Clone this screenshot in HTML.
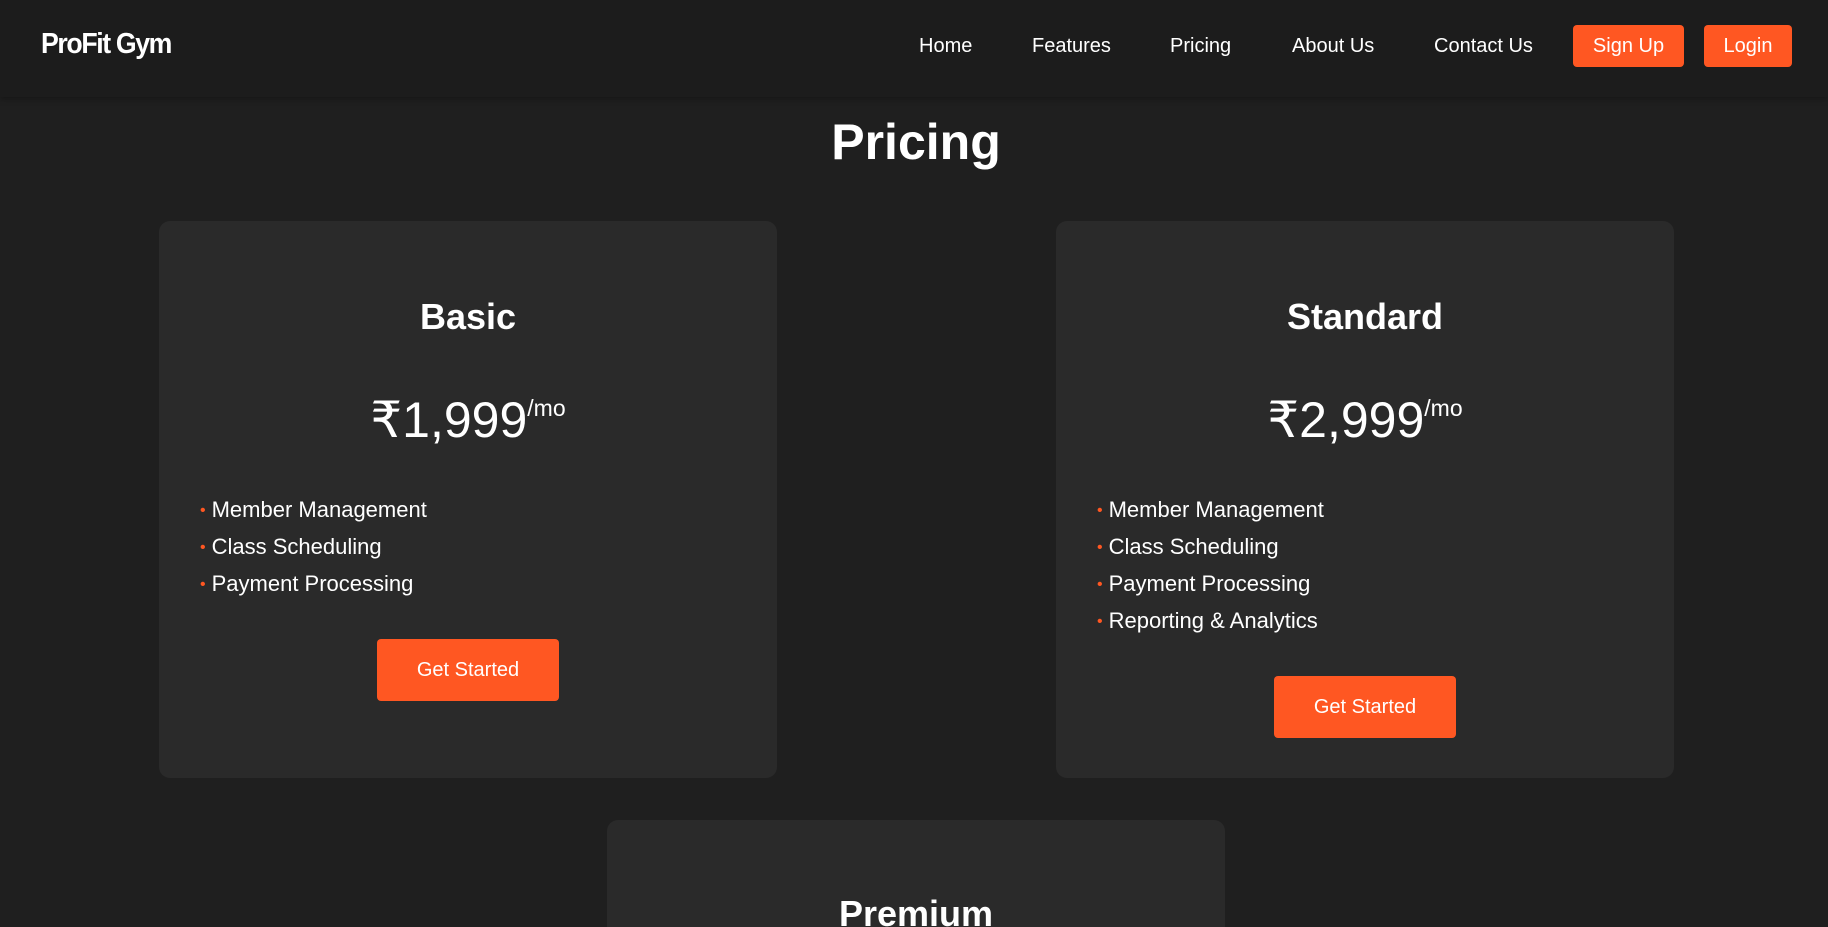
<!DOCTYPE html>
<html><head><meta charset="utf-8"><style>
*{margin:0;padding:0;box-sizing:border-box}
html,body{width:1828px;height:927px;overflow:hidden}
body{background:#1f1f1f;font-family:"Liberation Sans",Arial,sans-serif;color:#fff;position:relative}
.hdr{position:absolute;left:0;top:0;width:1828px;height:97px;background:#1c1c1c;box-shadow:0 2px 6px rgba(0,0,0,.3)}
.logo{position:absolute;left:41px;top:28px;font-size:29px;font-weight:bold;letter-spacing:-1.5px;transform:scaleX(.92);transform-origin:left}
.nav a{position:absolute;top:35px;font-size:20px;color:#fff;text-decoration:none}
.btn{position:absolute;background:#ff5722;color:#fff;border-radius:4px;text-align:center;font-size:20px}
h1{position:absolute;left:0;width:1832px;text-align:center;top:113px;font-size:50px;font-weight:bold}
.card{position:absolute;width:618px;background:#2a2a2a;border-radius:11px;text-align:center}
.card h2{position:absolute;left:0;width:100%;font-size:36px;font-weight:bold}
.price{position:absolute;left:0;width:100%;font-size:50px}
.price sup{font-size:23px;vertical-align:top;position:relative;top:4px}
ul{position:absolute;left:41px;list-style:none;text-align:left;font-size:22px}
li{height:37px;line-height:37px}
li::before{content:"•";color:#ff5722;font-size:16px;margin-right:6px;position:relative;top:-2px}
.gs{position:absolute;left:218px;width:182px;height:62px;line-height:62px;background:#ff5722;border-radius:4px;font-size:20px}
</style></head><body>
<div class="hdr">
<div class="logo">ProFit Gym</div>
<div class="nav">
<a style="left:919px">Home</a>
<a style="left:1032px">Features</a>
<a style="left:1170px">Pricing</a>
<a style="left:1292px">About Us</a>
<a style="left:1434px">Contact Us</a>
</div>
<div class="btn" style="left:1573px;top:25px;width:111px;height:42px;line-height:42px">Sign Up</div>
<div class="btn" style="left:1704px;top:25px;width:88px;height:42px;line-height:42px">Login</div>
</div>
<h1>Pricing</h1>
<div class="card" style="left:159px;top:221px;height:557px">
<h2 style="top:75px">Basic</h2>
<div class="price" style="top:170px">₹1,999<sup>/mo</sup></div>
<ul style="top:270px"><li>Member Management</li><li>Class Scheduling</li><li>Payment Processing</li></ul>
<div class="gs" style="top:418px">Get Started</div>
</div>
<div class="card" style="left:1056px;top:221px;height:557px">
<h2 style="top:75px">Standard</h2>
<div class="price" style="top:170px">₹2,999<sup>/mo</sup></div>
<ul style="top:270px"><li>Member Management</li><li>Class Scheduling</li><li>Payment Processing</li><li>Reporting &amp; Analytics</li></ul>
<div class="gs" style="top:455px">Get Started</div>
</div>
<div class="card" style="left:607px;top:820px;height:107px;border-radius:11px 11px 0 0">
<h2 style="top:73px">Premium</h2>
</div>
</body></html>
